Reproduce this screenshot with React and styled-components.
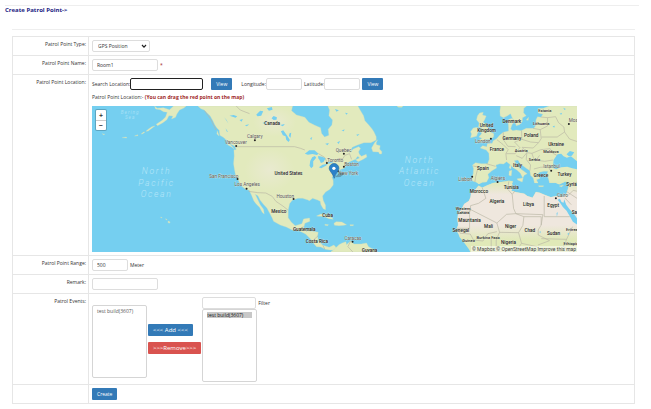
import React, { useState } from 'react';
import styled, { createGlobalStyle } from 'styled-components';

// * --------- STYLE --------- *
const GlobalStyle = createGlobalStyle`
    * {
        box-sizing: border-box;
    }
    body {
        margin: 0;
        background: #ffffff;
        color: #333333;
        font-family: 'Open Sans', 'Noto Sans', sans-serif;
        font-size: 5px;
        line-height: 8px;
    }
    button, input, select {
        font-family: inherit;
        font-size: inherit;
        line-height: inherit;
    }
`
const Page = styled.main`
    padding: 5px 16px 5px 12px;
`
const Header = styled.header`
    margin: 0 -4px 0 -7px;
    border-top: 1px solid #eeeeee;
    h1 {
        margin: 0;
        font-size: 6px;
        line-height: 9px;
        font-weight: bold;
        color: #1b1b83;
    }
`
const Divider = styled.hr`
    margin: 14px 0 6px;
    border: 0;
    border-top: 1px solid #eeeeee;
`
const Form = styled.form`
    border: 1px solid #e6e6e6;
    border-bottom: 0;
`
const Row = styled.div`
    display: grid;
    grid-template-columns: 76px 1fr;
    border-bottom: 1px solid #e6e6e6;
`
const LabelCell = styled.div`
    padding: 3px 2px;
    border-right: 1px solid #e6e6e6;
    text-align: right;
`
const FieldCell = styled.div`
    padding: 3px;
    min-width: 0;
`
const Line = styled.div`
    display: flex;
    align-items: center;
    gap: ${props => props.$gap || 0}px;
`
const Input = styled.input`
    width: ${props => props.$width || 66}px;
    height: 12px;
    padding: 0 4px;
    border: 1px solid ${props => props.$active ? '#222222' : '#dddddd'};
    border-radius: 2px;
    background: #ffffff;
    color: #333333;
    outline: 0;
`
const SelectBox = styled.div`
    position: relative;
    width: 58px;
    svg {
        position: absolute;
        right: 3px;
        top: 4px;
        pointer-events: none;
    }
`
const Select = styled.select`
    display: block;
    width: 100%;
    height: 12px;
    padding: 0 5px;
    appearance: none;
    border: 1px solid #dddddd;
    border-radius: 2px;
    background: #ffffff;
    color: #333333;
`
const Button = styled.button`
    height: 12px;
    padding: 0 5px;
    border: 0;
    border-radius: 1px;
    background: ${props => props.$danger ? '#d9534f' : '#337ab7'};
    color: #ffffff;
    font-size: ${props => props.$wide ? 6 : 5}px;
    white-space: nowrap;
    cursor: pointer;
`
const Group = styled.div`
    display: flex;
    align-items: center;
    margin-left: ${props => props.$space || 0}px;
`
const Hint = styled.p`
    margin: 4px 0 5px;
    line-height: 7px;
    strong {
        color: #a02828;
    }
`
const Required = styled.span`
    color: #a02828;
`
const Events = styled.div`
    display: flex;
    align-items: center;
    gap: 1px;
    height: 84px;
`
const EventColumn = styled.div`
    display: flex;
    flex-direction: column;
    align-items: flex-start;
    gap: ${props => props.$gap || 0}px;
    padding-top: ${props => props.$top || 0}px;
`
const ListBox = styled.select`
    width: 55px;
    height: 73px;
    padding: 2px 4px;
    border: 1px solid #d5d5d5;
    border-radius: 2px;
    background: #ffffff;
    color: #555555;
    overflow: hidden;
    outline: 0;
    option {
        min-height: 6px;
        padding: 0;
        line-height: 7px;
    }
    option:checked {
        background: #c8c8c8 linear-gradient(#c8c8c8, #c8c8c8);
    }
`
const MapFrame = styled.div`
    position: relative;
    width: 90%;
    height: 146px;
    background: #75cff0;
    overflow: hidden;
    svg {
        display: block;
        width: 100%;
        height: 100%;
    }
`
const ZoomControl = styled.div`
    position: absolute;
    left: 4px;
    top: 4px;
    display: flex;
    flex-direction: column;
    width: 10px;
    border-radius: 1px;
    background: #ffffff;
    box-shadow: 0 0 0 1px rgba(0, 0, 0, 0.2);
    button {
        height: 10px;
        padding: 0;
        border: 0;
        background: none;
        color: #333333;
        font-size: 7px;
        font-weight: bold;
        line-height: 9px;
    }
    button + button {
        border-top: 1px solid #cccccc;
    }
`
const Attribution = styled.div`
    position: absolute;
    right: 0;
    bottom: 0;
    padding: 0 1px;
    background: rgba(255, 255, 255, 0.5);
    font-family: Roboto, sans-serif;
    line-height: 6px;
    white-space: nowrap;
    a {
        color: #404040;
        text-decoration: none;
    }
`

// * --------- MAP DATA --------- *
const LAND = [
    // Alaska and the Aleutians
    'M195 8L203 15L222 13L240 19L252 8L290 8L283 14L270 20L262 32L258 42L246 47L250 38L238 37L232 49L220 58L204 67L200 63L218 51L228 41L233 27L222 25L212 19L198 17Z',
    'M196 68L184 77L176 83L169 84L177 77L187 70ZM166 86L160 91L155 92L162 86ZM145 94L135 98L145 97ZM110 101L98 103L112 104ZM38 91L46 93L42 94Z',
    // North America
    'M325 8L334 16L344 20L352 28L362 38L370 52L376 65L382 74L389 81L391 96L401 102L412 111L422 121L436 129L440 139L433 139L434 158L432 181L435 200L438 215L446 229L453 246L468 258L479 261L486 276L493 293L500 302L510 312L518 327L524 332L522 318L512 304L505 289L497 273L505 277L512 291L521 302L532 314L539 327L548 344L552 354L572 365L590 371L608 380L630 383L648 392L657 401L665 409L673 421L681 430L694 431L707 438L721 440L736 441L742 446L724 446L744 437L733 425L719 432L700 426L687 414L684 399L686 387L668 384L650 383L642 375L646 360L661 354L660 344L642 347L637 361L617 367L605 356L596 343L596 320L600 301L608 291L625 285L639 285L653 289L660 292L669 285L684 290L692 294L694 304L701 316L708 319L708 306L701 291L699 278L708 266L721 258L731 245L731 232L727 221L733 216L734 225L741 207L752 199L765 194L771 180L787 172L798 168L801 163L805 159L810 164L798 169L806 175L821 168L832 161L830 153L816 159L809 152L807 145L813 135L807 130L791 137L780 149L788 132L804 125L823 118L844 118L860 110L860 100L853 85L847 76L837 64L826 52L822 37L813 22L805 8L715 8L720 20L718 37L729 50L727 65L716 78L718 96L705 101L696 90L693 73L676 66L658 57L646 42L621 35L606 22L609 8Z',
    'M860 119L864 109L856 117L846 134L850 145L867 146L870 152L876 152L877 145L870 137L872 127L861 124Z',
    'M416 117L430 132L434 137L426 131L414 124ZM383 82L389 98L382 92Z',
    // Greenland tip
    'M922 8L940 8L937 12L927 12Z',
    // Caribbean
    'M681 338L694 332L710 335L728 344L731 348L718 346L702 339L686 339ZM733 360L740 355L757 356L771 364L763 366L748 367L735 366ZM706 363L717 364L714 367L706 366ZM781 364L792 364L791 367L782 367Z',
    // South America
    'M724 446L739 433L748 424L758 419L769 415L771 424L784 412L793 422L815 422L831 419L837 430L855 440L865 446Z',
    // Hawaii
    'M213 341L218 343L215 344ZM228 346L233 349L230 350ZM236 353L242 356L239 360L235 357Z',
    // British Isles
    'M1170 29L1181 27L1179 35L1190 38L1185 50L1181 56L1192 68L1198 78L1203 86L1213 91L1212 101L1203 108L1186 109L1173 115L1165 114L1177 105L1168 101L1176 91L1175 80L1177 73L1167 71L1169 59L1161 49L1164 37Z',
    'M1151 74L1163 72L1167 81L1161 99L1143 103L1146 92L1143 85Z',
    // Scandinavia
    'M1233 8L1231 23L1232 38L1242 43L1254 37L1263 31L1268 43L1277 57L1280 67L1290 64L1298 55L1299 43L1310 37L1302 28L1303 15L1311 8ZM1310 50L1317 42L1316 51Z',
    // Europe and western Asia
    'M1464 8L1379 8L1361 15L1345 16L1346 29L1360 33L1354 42L1344 40L1339 50L1340 64L1333 75L1310 75L1295 82L1280 80L1270 82L1263 77L1267 65L1272 57L1269 45L1258 48L1256 58L1257 72L1257 83L1241 87L1230 96L1221 106L1211 112L1208 120L1193 121L1192 130L1179 127L1172 134L1190 140L1198 150L1199 168L1194 181L1175 181L1158 178L1149 185L1152 196L1151 211L1146 225L1149 233L1161 237L1168 242L1178 237L1191 236L1198 223L1195 213L1207 202L1221 194L1219 185L1231 181L1242 182L1251 175L1262 184L1272 194L1282 200L1292 209L1300 224L1304 216L1313 211L1301 202L1289 194L1281 182L1274 172L1285 170L1293 182L1308 193L1321 202L1323 216L1331 224L1335 238L1345 239L1341 229L1352 225L1342 214L1350 207L1363 204L1375 204L1372 214L1376 224L1380 238L1398 238L1409 243L1426 235L1436 236L1437 250L1433 265L1428 278L1412 281L1400 278L1384 282L1368 276L1350 268L1339 266L1334 275L1329 283L1313 278L1304 271L1280 267L1265 262L1271 250L1267 241L1270 234L1258 232L1235 236L1211 239L1194 246L1178 253L1167 247L1159 257L1145 268L1143 282L1138 293L1124 302L1116 318L1105 336L1104 349L1106 365L1100 380L1107 391L1111 402L1119 411L1128 423L1139 438L1143 446L1464 446Z',
    // Mediterranean islands
    'M1283 226L1301 224L1298 236L1284 230ZM1259 203L1267 201L1265 218L1258 216ZM1260 187L1265 185L1264 197L1259 194ZM1347 247L1362 247L1361 250L1348 250ZM1409 248L1422 245L1416 251Z',
]
const LAKES = [
    'M646 151L659 141L675 141L687 151L682 155L669 152L655 154ZM668 162L676 158L680 163L671 174L671 189L665 195L660 187L662 173ZM686 158L698 160L708 165L702 176L694 179L690 170L686 165ZM688 192L699 184L715 181L709 187L695 195ZM713 177L730 172L731 177L717 181Z',
    'M574 84L581 81L593 97L601 110L597 116L590 109L588 99L580 96ZM600 90L605 88L603 103L598 98ZM546 45L552 38L562 42L561 49L552 50ZM500 34L512 22L521 24L515 37L504 39ZM532 15L547 11L549 19L538 22ZM572 65L586 62L580 69ZM519 59L531 54L527 63ZM662 105L668 101L665 111ZM707 121L718 119L714 126ZM756 82L765 78L763 84Z',
    'M404 42L411 50L417 61L413 55ZM420 37L432 35L443 39L438 43ZM450 50L460 47L456 55ZM408 75L416 87L411 84ZM466 66L479 63L472 69ZM736 17L748 21L741 25ZM767 28L775 30L770 34ZM800 94L810 92L804 98ZM743 117L752 113L747 122Z',
    // Black Sea, Azov and the Red Sea
    'M1391 184L1392 170L1404 153L1415 151L1422 159L1432 163L1444 159L1464 175L1464 198L1448 195L1433 190L1415 192L1400 198L1387 193ZM1431 153L1441 143L1454 147L1447 157L1438 159Z',
    'M1404 289L1412 299L1420 311L1431 322L1439 336L1450 355L1464 365L1464 347L1451 329L1440 318L1430 304L1424 288L1422 298L1416 296L1411 286Z',
    'M1389 69L1396 67L1394 73ZM1410 31L1418 28L1415 34ZM1421 13L1429 17L1425 20ZM1401 329L1405 327L1402 340ZM1349 386L1353 383L1353 390ZM1433 392L1438 388L1438 395Z',
]
const BORDERS = 'M438 130H615L633 135L646 140M687 151L705 162L713 178M731 174L746 166L760 166L766 156L780 151L786 168M477 264L505 268L529 269L548 279L559 294L580 308L595 320M379 80L365 50L345 22M440 8L452 20L480 31M632 382L641 369M650 385L660 376M672 410L686 397M700 426L706 438M784 412L775 430L790 446M1151 188L1166 191L1158 221L1156 236M1190 181L1218 189M1222 109L1241 124L1256 139L1249 151L1251 170M1241 87L1242 110L1255 129L1278 130M1296 82L1297 108L1275 116L1291 133L1277 151L1250 151M1297 108L1323 116L1347 118L1355 106L1352 79L1331 75M1352 79L1374 68L1374 43L1354 41M1374 43L1398 40L1407 58L1423 71L1425 86L1403 101L1356 101M1425 86L1440 107L1464 115M1347 118L1331 134L1298 132L1312 148L1327 150L1354 139L1382 136L1390 150L1404 157M1280 157L1298 165L1312 148M1312 148L1310 168L1323 185L1321 202M1327 150L1334 170L1366 174L1390 170M1333 197L1352 192L1376 190L1382 200M1350 156L1337 174M1178 253L1189 285L1167 300L1143 307L1143 323L1120 325M1105 347L1140 347L1140 317L1222 359L1251 333L1279 331L1360 334M1258 234L1254 257L1268 273L1272 315L1279 331L1303 340L1300 366L1287 388L1230 387L1222 359M1268 273L1276 263M1364 278V340H1441M1360 334L1355 365L1346 380L1346 395L1380 412L1345 425M1140 347V375L1104 375L1112 390L1142 392L1152 410L1180 413L1195 391L1222 385M1355 365V340L1303 340M1355 406L1431 408L1449 370M1431 408L1422 430L1443 446M1287 388L1296 420L1278 446M1205 407V446M1230 387L1220 410V446M1296 420L1342 430L1358 446M1426 248L1440 244L1464 236M1434 278L1451 261L1464 264M1430 264L1464 286M1426 284L1445 304'

const LABELS = [
    ['Canada', 548, 65, 1], ['Calgary', 496, 105], ['Vancouver', 439, 122], ['San Francisco', 403, 224],
    ['Los Angeles', 473, 249], ['United States', 597, 215, 1], ['Houston', 587, 284], ['Mexico', 568, 329, 1],
    ['Cuba', 714, 342, 1], ['Guatemala', 644, 384, 1], ['Costa Rica', 682, 419, 1], ['Caracas', 790, 409],
    ['Guyana', 840, 446, 1], ['Toronto', 737, 175], ['Quebec', 762, 145], ['Boston', 786, 187], ['New York', 776, 216],
    ['United', 1191, 72, 1], ['Kingdom', 1191, 86, 1], ['London', 1180, 119], ['Denmark', 1267, 60, 1],
    ['Estonia', 1366, 27, 1], ['Lithuania', 1355, 66, 1], ['Moscow', 1464, 57], ['Germany', 1267, 111, 1],
    ['Poland', 1325, 101, 1], ['Ukraine', 1400, 129, 1], ['Moldova', 1384, 149, 1], ['France', 1222, 143, 1],
    ['Austria', 1295, 145, 1], ['Serbia', 1335, 174, 1], ['Italy', 1284, 190, 1], ['Istanbul', 1386, 195],
    ['Spain', 1180, 200, 1], ['Lisbon', 1127, 233], ['Algiers', 1225, 229], ['Greece', 1354, 222, 1],
    ['Turkey', 1425, 219, 1], ['Tunisia', 1265, 257, 1], ['Syria', 1446, 249, 1], ['Morocco', 1168, 270, 1],
    ['Algeria', 1222, 300, 1], ['Libya', 1317, 308, 1], ['Egypt', 1391, 312, 1], ['Cairo', 1419, 281],
    ['Western', 1121, 319, 1], ['Sahara', 1121, 331, 1], ['Mauritania', 1140, 357, 1], ['Mali', 1197, 373, 1],
    ['Niger', 1263, 373, 1], ['Chad', 1321, 386, 1], ['Sudan', 1392, 396, 1], ['Eritrea', 1447, 384, 1],
    ['Senegal', 1114, 387, 1], ['Burkina Faso', 1196, 406, 1], ['Guinea', 1137, 415, 1], ['Nigeria', 1257, 423, 1],
    ['Saudi', 1464, 333, 1], ['Ethiopia', 1444, 426, 1],
]
const SMALL = ['Western', 'Sahara', 'Estonia', 'Lithuania', 'Moldova', 'Austria', 'Serbia', 'Eritrea', 'Burkina Faso', 'Guinea', 'Ethiopia']
const CITIES = [
    [496, 111], [440, 128], [444, 227], [471, 256], [612, 287], [789, 415], [712, 179], [763, 151], [763, 190],
    [745, 203], [1204, 106], [1438, 62], [1385, 202], [1148, 220], [1224, 236], [1399, 285],
]

// * --------- COMPONENTS --------- *
const WorldMap = () => (
    <svg viewBox="6 8 1458 438" preserveAspectRatio="xMidYMid slice" role="img" aria-label="Map">
        <defs>
            <linearGradient id="ground" gradientUnits="userSpaceOnUse" x1="0" y1="235" x2="0" y2="430">
                <stop offset="0" stopColor="#e0e9b8" />
                <stop offset="0.2" stopColor="#efe7de" />
                <stop offset="0.67" stopColor="#efe7de" />
                <stop offset="0.9" stopColor="#e0e9b8" />
            </linearGradient>
            <clipPath id="oldWorld"><path d={ LAND[LAND.length - 2] } /></clipPath>
            <radialGradient id="plains">
                <stop offset="0" stopColor="#e9ead0" />
                <stop offset="1" stopColor="#e9ead0" stopOpacity="0" />
            </radialGradient>
        </defs>
        <rect x="6" y="8" width="1458" height="438" fill="#75cff0" />
        <g fill="#e2eabd" stroke="#cbdfbd" strokeWidth="1">
            { LAND.map(d => <path key={ d } d={ d } />) }
        </g>
        <rect x="1080" y="235" width="390" height="215" fill="url(#ground)" clipPath="url(#oldWorld)" />
        <ellipse cx="540" cy="200" rx="75" ry="65" fill="url(#plains)" />
        <ellipse cx="555" cy="55" rx="65" ry="45" fill="url(#plains)" />
        <path d={ BORDERS } fill="none" stroke="#b9b7a5" strokeWidth="2" />
        <g fill="#75cff0">
            { LAKES.map(d => <path key={ d } d={ d } />) }
        </g>
        <g fill="#b5e6f8" fontStyle="italic" fontFamily="Roboto, sans-serif" textAnchor="middle">
            <g fontSize="26" letterSpacing="5" fontWeight="300">
                <text x="201" y="213">North</text>
                <text x="201" y="248">Pacific</text>
                <text x="201" y="282">Ocean</text>
                <text x="990" y="178">North</text>
                <text x="990" y="212">Atlantic</text>
                <text x="990" y="247">Ocean</text>
            </g>
            <g fontSize="14" letterSpacing="3" fill="#a5e0f6">
                <text x="122" y="31">Bering</text>
                <text x="122" y="47">Sea</text>
            </g>
        </g>
        <g textAnchor="middle" fontFamily="Roboto, sans-serif" stroke="#f4f5e2" strokeWidth="1" paintOrder="stroke">
            { LABELS.map(([name, x, y, country]) => (
                <text key={ name } x={ x } y={ y } fill={ country ? '#222222' : '#555555' }
                    fontWeight={ country ? 500 : 400 } fontSize={ SMALL.includes(name) ? 12 : 14 }>{ name }</text>
            )) }
        </g>
        { CITIES.map(([x, y]) => <circle key={ x + '-' + y } cx={ x } cy={ y } r="3" fill="#222222" />) }
        {/* Marker of the patrol point */}
        <path d="M735 222L753 207L765 211L752 221Z" fill="#40606a" opacity="0.45" />
        <path d="M734 225C729 209 719 203 719 195A14 14 0 0 1 748 195C748 203 738 209 734 225Z" fill="#2b82c9" stroke="#216ba5" strokeWidth="2" />
        <circle cx="733" cy="195" r="5" fill="#ffffff" />
    </svg>
)

const App = () => {

    // * ---------- STATES ---------- *
    const [name, setName] = useState('Room1');
    const [range, setRange] = useState('500');
    const [picked, setPicked] = useState(['3607']);

    return (
        <Page>
            <GlobalStyle />
            <Header><h1>Create Patrol Point-&gt;</h1></Header>
            <Divider />
            <Form onSubmit={ e => e.preventDefault() }>
                <Row>
                    <LabelCell><label htmlFor="type">Patrol Point Type:</label></LabelCell>
                    <FieldCell>
                        <SelectBox>
                            <Select id="type">
                                <option>GPS Position</option>
                            </Select>
                            <svg width="6" height="5" viewBox="0 0 6 5"><path d="M1 1L3 3.2L5 1" fill="none" stroke="#222222" strokeWidth="1.2" /></svg>
                        </SelectBox>
                    </FieldCell>
                </Row>
                <Row>
                    <LabelCell><label htmlFor="name">Patrol Point Name:</label></LabelCell>
                    <FieldCell>
                        <Line $gap={ 2 }>
                            <Input id="name" value={ name } onChange={ e => setName(e.target.value) } />
                            <Required>*</Required>
                        </Line>
                    </FieldCell>
                </Row>
                <Row>
                    <LabelCell>Patrol Point Location:</LabelCell>
                    <FieldCell>
                        <Line>
                            <Group>
                                <label htmlFor="search">Search Location:</label>
                                <Input id="search" $width={ 73 } $active />
                            </Group>
                            <Group $space={ 8 }><Button type="button">View</Button></Group>
                            <Group $space={ 9 }>
                                <label htmlFor="lng">Longitude:</label>
                                <Input id="lng" $width={ 36 } />
                            </Group>
                            <Group $space={ 2 }>
                                <label htmlFor="lat">Latitude:</label>
                                <Input id="lat" $width={ 36 } />
                            </Group>
                            <Group $space={ 2 }><Button type="button">View</Button></Group>
                        </Line>
                        <Hint>Patrol Point Location:- <strong>(You can drag the red point on the map)</strong></Hint>
                        <MapFrame>
                            <WorldMap />
                            <ZoomControl>
                                <button type="button" aria-label="Zoom in">+</button>
                                <button type="button" aria-label="Zoom out">−</button>
                            </ZoomControl>
                            <Attribution>
                                <a href="#mapbox">© Mapbox</a> <a href="#osm">© OpenStreetMap</a> <a href="#improve">Improve this map</a>
                            </Attribution>
                        </MapFrame>
                    </FieldCell>
                </Row>
                <Row>
                    <LabelCell><label htmlFor="range">Patrol Point Range:</label></LabelCell>
                    <FieldCell>
                        <Line $gap={ 2 }>
                            <Input id="range" $width={ 36 } value={ range } onChange={ e => setRange(e.target.value) } />
                            <span>Meter</span>
                        </Line>
                    </FieldCell>
                </Row>
                <Row>
                    <LabelCell><label htmlFor="remark">Remark:</label></LabelCell>
                    <FieldCell><Line><Input id="remark" /></Line></FieldCell>
                </Row>
                <Row>
                    <LabelCell>Patrol Events:</LabelCell>
                    <FieldCell>
                        <Events>
                            <EventColumn $top={ 4 }>
                                <ListBox multiple size="8" aria-label="Patrol events">
                                    <option value="3607">test build(3607)</option>
                                </ListBox>
                            </EventColumn>
                            <EventColumn $gap={ 6 }>
                                <Button type="button" $wide>&lt;&lt;&lt; Add &lt;&lt;&lt;</Button>
                                <Button type="button" $wide $danger>&gt;&gt;&gt;Remove&gt;&gt;&gt;</Button>
                            </EventColumn>
                            <EventColumn>
                                <Line $gap={ 2 }>
                                    <Input id="filter" $width={ 54 } />
                                    <label htmlFor="filter">Filter</label>
                                </Line>
                                <ListBox multiple size="8" aria-label="Available events" value={ picked }
                                    onChange={ e => setPicked([...e.target.selectedOptions].map(o => o.value)) }>
                                    <option value="3607">test build(3607)</option>
                                </ListBox>
                            </EventColumn>
                        </Events>
                    </FieldCell>
                </Row>
                <Row>
                    <LabelCell />
                    <FieldCell><Line><Button type="submit">Create</Button></Line></FieldCell>
                </Row>
            </Form>
        </Page>
    );
};

export default App;
